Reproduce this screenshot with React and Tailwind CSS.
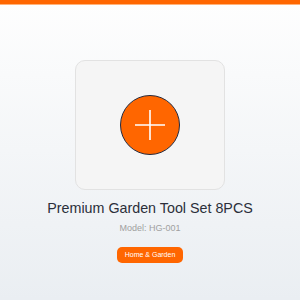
export default function App() {
  return (
    <div className="flex h-[300px] w-full flex-col bg-gradient-to-b from-[#fefefe] to-[#eaeef2]" style={{ fontFamily: '"Liberation Sans", Arial, sans-serif' }}>
      <div className="h-[4px] w-full bg-[#ff6600]" />
      <div className="h-px w-full bg-[#ffb27a]" />
      <div className="flex flex-col items-center pt-[55px]">
        <div className="flex h-[130px] w-[150px] items-center justify-center rounded-[10px] border border-[#e2e2e2] bg-[#f5f5f5]">
          <div className="flex h-[60px] w-[60px] items-center justify-center rounded-full border-[1.5px] border-[#262a3d] bg-[#ff6600]">
            <svg width="32" height="32" viewBox="0 0 32 32">
              <path d="M16 1v30M1 16h30" stroke="#ffffff" strokeWidth="1.6" fill="none" />
            </svg>
          </div>
        </div>
        <div className="mt-[8px] text-[14.3px] leading-[20px] text-[#2b2f3a]">Premium Garden Tool Set 8PCS</div>
        <div className="mt-[4px] text-[9px] leading-[12px] text-[#a0a0a0]">Model: HG-001</div>
        <div className="mt-[13px] rounded-[5px] bg-[#ff6600] px-[7.5px] py-[3px] text-[7px] leading-[10px] text-white">Home &amp; Garden</div>
      </div>
    </div>
  );
}
